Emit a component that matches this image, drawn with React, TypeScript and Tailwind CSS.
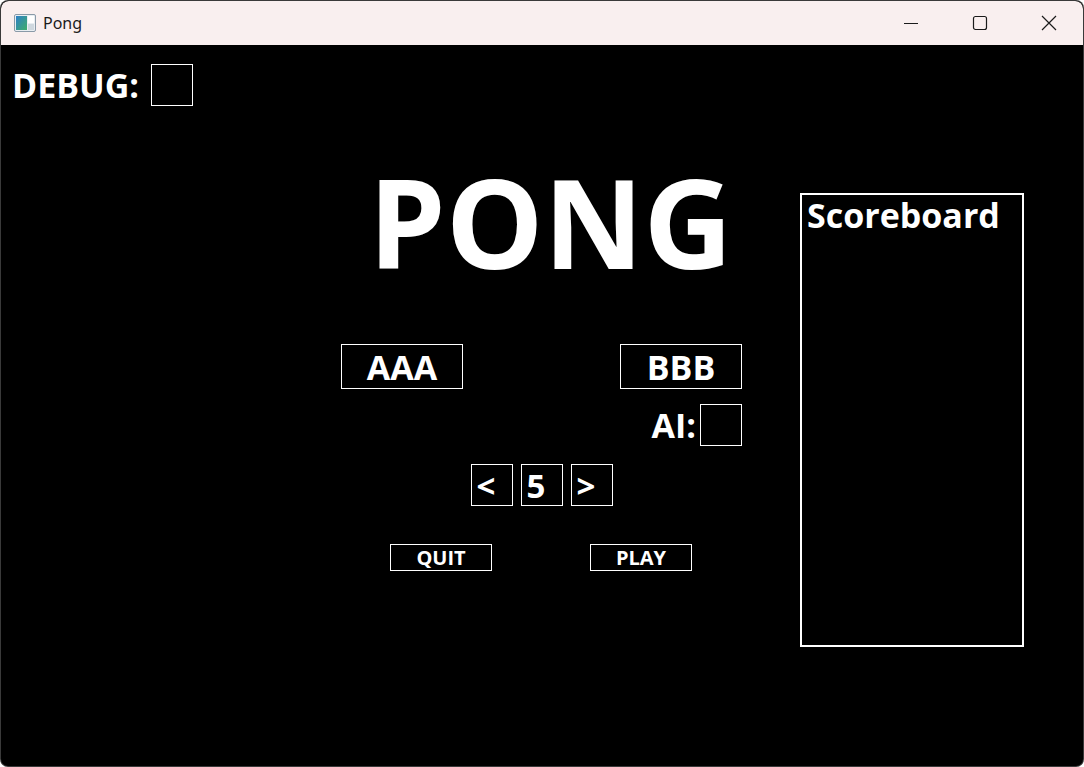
import React from "react";

const boxStyle = "border border-white flex items-center justify-center";
const smallBox = "border border-white flex items-center justify-start pl-[5px] w-[42px] h-[42px] text-[33px] leading-none";

function AppIcon() {
  return (
    <svg width="22" height="18" viewBox="0 0 22 18">
      <defs>
        <linearGradient id="g" x1="0" y1="0" x2="1" y2="1">
          <stop offset="0" stopColor="#2f7fc8" />
          <stop offset="1" stopColor="#3fae6a" />
        </linearGradient>
      </defs>
      <rect x="0.5" y="0.5" width="21" height="17" rx="1.5" fill="#e9eef2" stroke="#8a9aa8" />
      <rect x="2" y="2" width="11" height="14" fill="url(#g)" />
      <rect x="14" y="2" width="6" height="7" fill="#ffffff" />
      <rect x="14" y="10" width="6" height="6" fill="#cfd8df" />
    </svg>
  );
}

function TitleBar() {
  return (
    <div className="h-[44px] bg-[#f9efef] flex items-center shrink-0 rounded-t-[8px]">
      <div className="pl-[13px] pr-[7px] flex items-center">
        <AppIcon />
      </div>
      <span className="text-[16px] text-[#1b1b1b] font-['Segoe_UI','Noto_Sans',sans-serif]">Pong</span>
      <div className="ml-auto flex items-center h-full">
        <div className="w-[69px] h-full flex items-center justify-center">
          <svg width="16" height="16" viewBox="0 0 16 16">
            <line x1="1" y1="8.5" x2="15" y2="8.5" stroke="#1b1b1b" strokeWidth="1" />
          </svg>
        </div>
        <div className="w-[69px] h-full flex items-center justify-center">
          <svg width="16" height="16" viewBox="0 0 16 16">
            <rect x="1.5" y="1.5" width="13" height="13" rx="2" fill="none" stroke="#1b1b1b" strokeWidth="1.2" />
          </svg>
        </div>
        <div className="w-[69px] h-full flex items-center justify-center">
          <svg width="16" height="16" viewBox="0 0 16 16">
            <path d="M1 1 L15 15 M15 1 L1 15" stroke="#1b1b1b" strokeWidth="1.2" fill="none" />
          </svg>
        </div>
      </div>
    </div>
  );
}

export default function App() {
  return (
    <div className="w-[1084px] h-[767px] bg-[#3a3a3a] p-px rounded-[8px] font-['Open_Sans',sans-serif] overflow-hidden">
      <div className="w-full h-full flex flex-col bg-black rounded-[7px] overflow-hidden">
        <TitleBar />

        <div className="flex-1 flex flex-col text-white font-bold">
          {/* debug row */}
          <div className="flex items-center pt-[19px] pl-[11px] gap-[12px] h-[61px]">
            <span className="text-[34px] leading-none">DEBUG:</span>
            <div className="w-[42px] h-[42px] border border-white" />
          </div>

          <div className="flex">
            <div className="w-[340px]" />

            {/* center column */}
            <div className="w-[401px] flex flex-col">
              <div className="mt-[54px] h-[123px] pl-[18px] text-center text-[123px] leading-none">
                PONG
              </div>

              <div className="mt-[61px] flex justify-between">
                <div className={`${boxStyle} w-[122px] h-[45px] text-[34px] leading-none`}>AAA</div>
                <div className={`${boxStyle} w-[122px] h-[45px] text-[34px] leading-none`}>BBB</div>
              </div>

              <div className="mt-[15px] flex justify-end items-center gap-[4px]">
                <span className="text-[34px] leading-none">AI:</span>
                <div className="w-[42px] h-[42px] border border-white" />
              </div>

              <div className="mt-[18px] flex justify-center gap-[8px]">
                <div className={smallBox}>&lt;</div>
                <div className={smallBox}>5</div>
                <div className={smallBox}>&gt;</div>
              </div>

              <div className="mt-[38px] flex justify-between pl-[49px] pr-[50px]">
                <div className={`${boxStyle} w-[102px] h-[27px] text-[20px] leading-none`}>QUIT</div>
                <div className={`${boxStyle} w-[102px] h-[27px] text-[20px] leading-none`}>PLAY</div>
              </div>
            </div>

            <div className="w-[58px]" />

            {/* scoreboard */}
            <div className="mt-[87px] w-[224px] h-[454px] border-2 border-white px-[5px] pt-[1px]">
              <div className="text-[34px] leading-[38px]">Scoreboard</div>
            </div>
          </div>
        </div>
      </div>
    </div>
  );
}
